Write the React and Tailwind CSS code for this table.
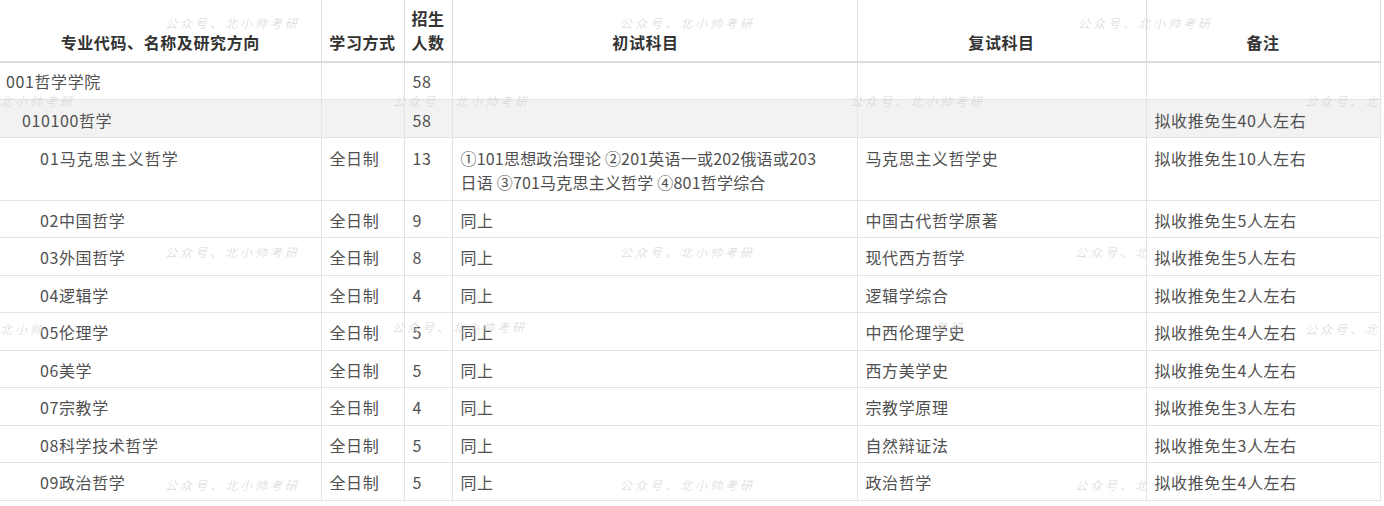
const rows = [
  { name: "02中国哲学", n: "9", retest: "中国古代哲学原著", note: "5" },
  { name: "03外国哲学", n: "8", retest: "现代西方哲学", note: "5" },
  { name: "04逻辑学", n: "4", retest: "逻辑学综合", note: "2" },
  { name: "05伦理学", n: "5", retest: "中西伦理学史", note: "4" },
  { name: "06美学", n: "5", retest: "西方美学史", note: "4" },
  { name: "07宗教学", n: "4", retest: "宗教学原理", note: "3" },
  { name: "08科学技术哲学", n: "5", retest: "自然辩证法", note: "3" },
  { name: "09政治哲学", n: "5", retest: "政治哲学", note: "4" },
];

// faint watermark scribbles laid over the table
const marks = [
  { x: 165, y: 14, t: "公众号、北小帅考研" },
  { x: 620, y: 14, t: "公众号、北小帅考研" },
  { x: 1078, y: 14, t: "公众号、北小帅考研" },
  { x: 0, y: 92, t: "北小帅考研" },
  { x: 393, y: 92, t: "公众号" },
  { x: 455, y: 92, t: "北小帅考研" },
  { x: 850, y: 92, t: "公众号、北小帅考研" },
  { x: 1305, y: 92, t: "公众号、北" },
  { x: 165, y: 243, t: "公众号、北小帅考研" },
  { x: 620, y: 243, t: "公众号、北小帅考研" },
  { x: 1075, y: 243, t: "公众号、北" },
  { x: 0, y: 320, t: "北小帅" },
  { x: 392, y: 318, t: "公众号、北小帅考研" },
  { x: 935, y: 318, t: "考研" },
  { x: 1305, y: 320, t: "公众号、北" },
  { x: 165, y: 476, t: "公众号、北小帅考研" },
  { x: 620, y: 476, t: "公众号、北小帅考研" },
  { x: 1075, y: 476, t: "公众号、北" },
];

const td = "border-r border-b border-[#e3e3e3] px-[8px] align-top";
const th = "border-r border-b-2 border-[#dcdcdc] align-bottom pb-[7px] text-center font-bold";

export default function App() {
  return (
    <div
      className="relative w-[1384px] h-[506px] bg-white overflow-hidden text-[16px] tracking-[0.6px] text-[#505050]"
      style={{ fontFamily: '"Noto Sans CJK SC", "Noto Sans", sans-serif' }}
    >
      <table className="table-fixed border-collapse w-[1380px] leading-[24px]">
        <colgroup>
          <col className="w-[321px]" />
          <col className="w-[83px]" />
          <col className="w-[48px]" />
          <col className="w-[405px]" />
          <col className="w-[289px]" />
          <col className="w-[234px]" />
        </colgroup>
        <thead>
          <tr className="h-[62px] text-[#333]">
            <th className={th}>专业代码、名称及研究方向</th>
            <th className={th}>学习方式</th>
            <th className={th}>招生<br />人数</th>
            <th className={`${th} pr-[18px]`}>初试科目</th>
            <th className={th}>复试科目</th>
            <th className={th}>备注</th>
          </tr>
        </thead>
        <tbody>
          <tr className="h-[37px]">
            <td className={`${td} pt-[6px] !px-[6px]`}>001哲学学院</td>
            <td className={td}></td>
            <td className={`${td} pt-[6px]`}>58</td>
            <td className={td}></td>
            <td className={td}></td>
            <td className={td}></td>
          </tr>
          <tr className="h-[38px] bg-[#f2f2f2]">
            <td className={`${td} pt-[8px] !pl-[22px]`}>010100哲学</td>
            <td className={td}></td>
            <td className={`${td} pt-[8px]`}>58</td>
            <td className={td}></td>
            <td className={td}></td>
            <td className={`${td} pt-[8px]`}>拟收推免生40人左右</td>
          </tr>
          <tr className="h-[63px]">
            <td className={`${td} pt-[8px] !pl-[40px] tracking-[1px]`}>01马克思主义哲学</td>
            <td className={`${td} pt-[8px]`}>全日制</td>
            <td className={`${td} pt-[8px]`}>13</td>
            <td className={`${td} pt-[8px] tracking-[0.2px]`}>
              ①101思想政治理论 ②201英语一或202俄语或203
              <br />
              日语 ③701马克思主义哲学 ④801哲学综合
            </td>
            <td className={`${td} pt-[8px]`}>马克思主义哲学史</td>
            <td className={`${td} pt-[8px]`}>拟收推免生10人左右</td>
          </tr>
          {rows.map((r) => (
            <tr key={r.name} className="h-[37.5px]">
              <td className={`${td} pt-[7px] !pl-[40px]`}>{r.name}</td>
              <td className={`${td} pt-[7px]`}>全日制</td>
              <td className={`${td} pt-[7px]`}>{r.n}</td>
              <td className={`${td} pt-[7px]`}>同上</td>
              <td className={`${td} pt-[7px]`}>{r.retest}</td>
              <td className={`${td} pt-[7px]`}>拟收推免生{r.note}人左右</td>
            </tr>
          ))}
        </tbody>
      </table>
      {marks.map((m, i) => (
        <span
          key={i}
          className="absolute text-[12px] italic font-light tracking-[3px] text-[#d4d4d4] whitespace-nowrap pointer-events-none"
          style={{ left: m.x, top: m.y }}
        >
          {m.t}
        </span>
      ))}
    </div>
  );
}
